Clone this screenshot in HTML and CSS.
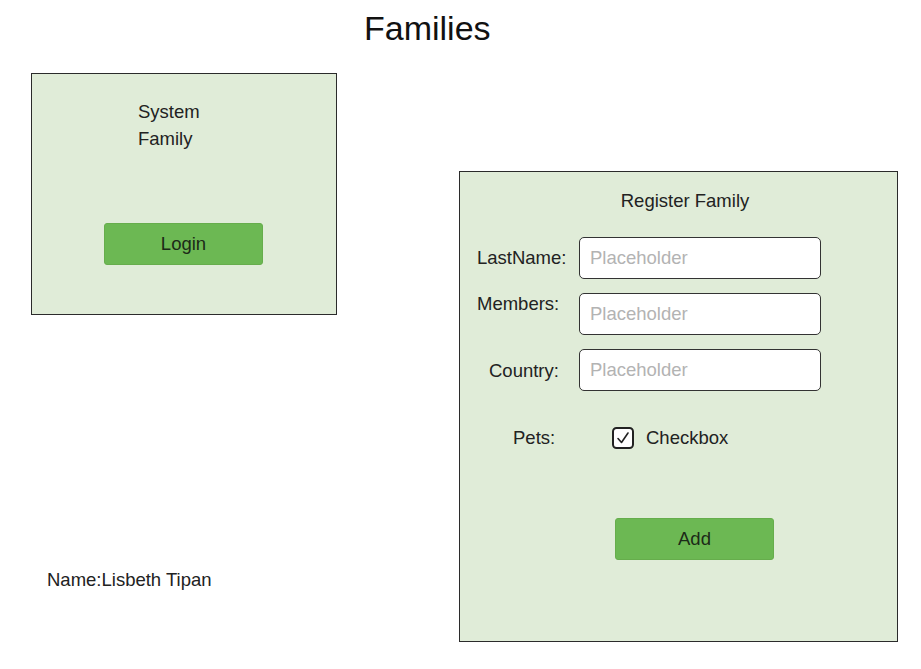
FILE: index.html
```html
<!DOCTYPE html>
<html lang="en">
<head>
<meta charset="utf-8">
<title>Families</title>
<link rel="stylesheet" href="styles.css">
</head>
<body>
<header class="header">
  <h1 class="title">Families</h1>
</header>
<main class="main">
  <section class="left-col">
    <div class="card login-card">
      <p class="system-text">System<br>Family</p>
      <button class="btn login-btn" type="button">Login</button>
    </div>
    <p class="author">Name:Lisbeth Tipan</p>
  </section>
  <section class="card register-card">
    <h2 class="register-title">Register Family</h2>
    <form class="form">
      <label class="label label-lastname" for="lastname">LastName:</label>
      <input class="field" id="lastname" type="text" placeholder="Placeholder">
      <label class="label label-members" for="members">Members:</label>
      <input class="field" id="members" type="text" placeholder="Placeholder">
      <label class="label label-country" for="country">Country:</label>
      <input class="field" id="country" type="text" placeholder="Placeholder">
    </form>
    <div class="pets-row">
      <span class="pets-label">Pets:</span>
      <span class="check">
        <svg class="check-box" width="22" height="22" viewBox="0 0 22 22">
          <rect x="1" y="1" width="20" height="20" rx="3.5" fill="#ffffff" stroke="#222" stroke-width="2"/>
          <path d="M6 11.5 L9.5 15.5 L16 6" fill="none" stroke="#222" stroke-width="1.6" stroke-linecap="round" stroke-linejoin="round"/>
        </svg>
        <span class="check-text">Checkbox</span>
      </span>
    </div>
    <button class="btn add-btn" type="button">Add</button>
  </section>
</main>
</body>
</html>
```
FILE: styles.css
```css
* { box-sizing: border-box; }

body {
  margin: 0;
  background: #ffffff;
  font-family: "Liberation Sans", Arial, sans-serif;
  color: #222222;
  font-size: 18.5px;
}

.header {
  padding-top: 8px;
  padding-left: 364px;
  height: 73px;
}

.title {
  margin: 0;
  font-size: 34px;
  font-weight: normal;
  line-height: 40px;
  color: #111111;
}

.main {
  display: flex;
  align-items: flex-start;
  padding-left: 31px;
}

.left-col {
  display: flex;
  flex-direction: column;
  width: 306px;
}

.card {
  background: #e0ecd8;
  border: 1px solid #2b2b2b;
}

.login-card {
  height: 242px;
  padding-top: 24px;
}

.system-text {
  margin: 0 0 71px 106px;
  line-height: 27px;
}

.btn {
  display: block;
  border: 1px solid #66ad4c;
  border-radius: 3px;
  background: #6cb853;
  font-family: "Liberation Sans", Arial, sans-serif;
  font-size: 18.5px;
  color: #1c2a18;
  height: 42px;
  width: 159px;
  padding: 0;
}

.login-btn {
  margin-left: 72px;
}

.author {
  margin: 254px 0 0 16px;
  line-height: 22px;
}

.register-card {
  margin-left: 122px;
  margin-top: 98px;
  width: 439px;
  height: 471px;
  padding-top: 18px;
}

.register-title {
  margin: 0;
  font-size: 18.5px;
  font-weight: normal;
  line-height: 22px;
  text-align: center;
  padding-left: 13px;
}

.form {
  display: grid;
  grid-template-columns: 102px 242px;
  row-gap: 14px;
  margin: 25px 0 0 17px;
  align-items: center;
}

.label {
  line-height: 22px;
}

.label-members {
  align-self: start;
  margin-top: 0;
}

.label-country {
  padding-left: 12px;
  padding-top: 2px;
}

.field {
  height: 42px;
  width: 242px;
  border: 1.5px solid #333333;
  border-radius: 5px;
  background: #ffffff;
  padding: 0 0 0 10px;
  font-family: "Liberation Sans", Arial, sans-serif;
  font-size: 18.5px;
  color: #222222;
}

.field::placeholder {
  color: #b3b3b3;
}

.pets-row {
  display: flex;
  align-items: center;
  margin: 36px 0 0 53px;
  height: 22px;
}

.pets-label {
  width: 99px;
  line-height: 22px;
}

.check {
  display: flex;
  align-items: center;
  gap: 12px;
}

.check-box {
  display: block;
}

.check-text {
  line-height: 22px;
}

.add-btn {
  margin: 69px 0 0 155px;
}
```
